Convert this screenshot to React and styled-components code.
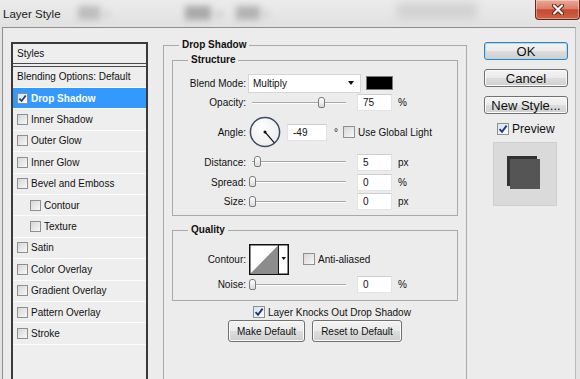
import React from 'react';
import styled, { createGlobalStyle } from 'styled-components';

const GlobalStyle = createGlobalStyle`
  html, body {
    margin: 0;
    padding: 0;
  }
  body {
    width: 580px;
    height: 379px;
    overflow: hidden;
    background: #e3e3e3;
    font-family: "Liberation Sans", Arial, sans-serif;
    color: #111;
  }
`;

const Window = styled.div`
  width: 580px;
  height: 379px;
  display: flex;
  flex-direction: column;
  overflow: hidden;
  background: #e3e3e3;
`;

const TitleBar = styled.div`
  height: 27px;
  flex-shrink: 0;
  display: flex;
  align-items: flex-start;
  background: linear-gradient(#ebebeb, #e1e1e1);
`;

const Title = styled.div`
  width: 70px;
  padding: 8px 0 0 3px;
  font-size: 11.5px;
  line-height: 13px;
  color: #1a1a1a;
  flex-shrink: 0;
`;

// blurred toolbar shapes behind the dialog title
const Smudge = styled.div`
  flex-shrink: 0;
  margin: ${p => p.$top}px 0 0 ${p => p.$ml}px;
  width: ${p => p.$w}px;
  height: ${p => p.$h}px;
  background: ${p => p.$c};
  filter: blur(${p => p.$blur || 3}px);
`;

const CloseButton = styled.div`
  margin-left: auto;
  width: 45px;
  height: 20px;
  box-sizing: border-box;
  flex-shrink: 0;
  display: flex;
  align-items: center;
  justify-content: center;
  border: 1px solid #6a2619;
  border-top: none;
  border-radius: 0 0 4px 4px;
  background: linear-gradient(#eaa895 0%, #dc806a 45%, #c54a30 52%, #cf6446 100%);
  box-shadow: inset 0 0 0 1px rgba(255, 255, 255, 0.35);
`;

const Body = styled.div`
  flex: 1;
  display: flex;
  align-items: flex-start;
  margin: 0 4px 0 2px;
  padding: 14px 0 0 8px;
  background: #ececec;
  border-top: 1px solid #8e8e8e;
  border-left: 1px solid #8e8e8e;
  border-right: 1px solid #b9b9b9;
  overflow: hidden;
`;

/* ---------- styles list ---------- */

const StylesPanel = styled.div`
  width: 137px;
  height: 360px;
  flex-shrink: 0;
  box-sizing: border-box;
  border: 2px solid #3a3a3a;
  background: #eeeeee;
  font-size: 10px;
`;

const PanelHeader = styled.div`
  height: 19px;
  line-height: 19px;
  padding-left: 4px;
  border-bottom: 4px double #4a4a4a;
`;

const BlendingRow = styled.div`
  height: 21px;
  box-sizing: border-box;
  line-height: 20px;
  padding-left: 4px;
  border-bottom: 1px solid #fbfbfb;
`;

const StyleItem = styled.div`
  height: 21.4px;
  box-sizing: border-box;
  display: flex;
  align-items: center;
  gap: 3px;
  padding-left: ${p => (p.$indent ? 17 : 4)}px;
  border-bottom: 1px solid #fbfbfb;
  background: ${p => (p.$active ? '#3399ff' : 'transparent')};
  color: ${p => (p.$active ? '#fff' : '#111')};
  font-weight: ${p => (p.$active ? 'bold' : 'normal')};
`;

/* ---------- checkbox ---------- */

const Box = styled.span`
  width: ${p => p.$size || 12}px;
  height: ${p => p.$size || 12}px;
  box-sizing: border-box;
  flex-shrink: 0;
  display: flex;
  align-items: center;
  justify-content: center;
  margin-left: ${p => p.$ml || 0}px;
  border: 1px solid #8e8f8f;
  background: ${p =>
    p.$checked
      ? 'linear-gradient(135deg, #cfe3f7, #ffffff)'
      : 'linear-gradient(135deg, #d6d6d6, #f8f8f8)'};
`;

const Check = ({ size = 12, checked, ml }) => (
  <Box $size={size} $checked={checked} $ml={ml}>
    {checked && (
      <svg width={size - 2} height={size - 2} viewBox="0 0 10 10">
        <path d="M1.6 5.2 L4 7.8 L8.6 1.6" fill="none" stroke="#24357a" strokeWidth="1.9" />
      </svg>
    )}
  </Box>
);

/* ---------- group boxes ---------- */

const Group = styled.fieldset`
  margin: ${p => p.$mt || 0}px 0 0 ${p => p.$ml || 0}px;
  padding: ${p => p.$pad};
  width: ${p => (p.$w ? `${p.$w}px` : 'auto')};
  height: ${p => (p.$h ? `${p.$h}px` : 'auto')};
  min-width: 0;
  box-sizing: border-box;
  flex-shrink: 0;
  border: 1px solid #a9a9a9;
  font-size: 10px;
`;

const Legend = styled.legend`
  margin-left: ${p => p.$ml}px;
  padding: 0 3px;
  font-size: 10px;
  font-weight: bold;
  line-height: 12px;
  color: #111;
`;

const Row = styled.div`
  height: ${p => p.$h}px;
  display: flex;
  align-items: center;
  white-space: nowrap;
`;

const Label = styled.span`
  width: 73px;
  flex-shrink: 0;
  text-align: right;
`;

const SelectBox = styled.div`
  width: 113px;
  height: 19px;
  box-sizing: border-box;
  margin-left: 2px;
  padding: 0 6px 0 4px;
  display: flex;
  align-items: center;
  justify-content: space-between;
  background: #fff;
  border: 1px solid #d6d6d6;
`;

const Caret = styled.span`
  width: 0;
  height: 0;
  border-left: 3px solid transparent;
  border-right: 3px solid transparent;
  border-top: 4px solid #111;
`;

const Swatch = styled.span`
  width: 27px;
  height: 14px;
  box-sizing: border-box;
  margin-left: 5px;
  background: #000;
  border: 1px solid #7a7a7a;
`;

const SliderTrack = styled.div`
  position: relative;
  width: 94px;
  height: 12px;
  margin-left: 6px;
  flex-shrink: 0;
  &::before {
    content: '';
    position: absolute;
    left: 0;
    right: 0;
    top: 5px;
    height: 1px;
    background: #a8a8a8;
    border-bottom: 1px solid #fdfdfd;
  }
`;

const Thumb = styled.span`
  position: absolute;
  top: 0;
  width: 7px;
  height: 11px;
  box-sizing: border-box;
  border: 1px solid #7b7b7b;
  border-radius: 3px 3px 2px 2px;
  background: linear-gradient(#ffffff, #dadada);
`;

const NumberBox = styled.span`
  width: ${p => p.$w}px;
  height: 17px;
  box-sizing: border-box;
  flex-shrink: 0;
  margin-left: ${p => p.$ml}px;
  padding-left: 5px;
  line-height: 15px;
  background: #fff;
  border: 1px solid #e3e3e3;
  border-top-color: #cdcdcd;
`;

const Unit = styled.span`
  margin-left: ${p => p.$ml || 6}px;
`;

const Text = styled.span`
  margin-left: ${p => p.$ml || 3}px;
`;

const DialWrap = styled.span`
  margin-left: 3px;
  display: flex;
`;

const ContourWrap = styled.span`
  margin-left: 3px;
  display: flex;
`;

const BottomRow = styled.div`
  display: flex;
  align-items: center;
  gap: ${p => p.$gap || 0}px;
  margin: ${p => p.$mt}px 0 0 ${p => p.$ml}px;
  height: ${p => p.$h}px;
  font-size: 10px;
`;

const Button = styled.div`
  width: ${p => p.$w}px;
  height: ${p => p.$h}px;
  box-sizing: border-box;
  display: flex;
  align-items: center;
  justify-content: center;
  margin-top: ${p => p.$mt || 0}px;
  font-size: ${p => p.$fs || 10}px;
  color: #111;
  border: 1px solid ${p => (p.$default ? '#3c7fb1' : '#707070')};
  border-radius: 3px;
  background: linear-gradient(#f3f3f3 0%, #ebebeb 48%, #dddddd 52%, #cfcfcf 100%);
  box-shadow: inset 0 0 0 1px ${p => (p.$default ? '#a8dcf5' : '#fbfbfb')};
`;

/* ---------- right column ---------- */

const SideColumn = styled.div`
  margin-left: 17px;
  display: flex;
  flex-direction: column;
  flex-shrink: 0;
`;

const PreviewToggle = styled.div`
  margin: 9px 0 0 13px;
  height: 12px;
  display: flex;
  align-items: center;
  font-size: 12px;
`;

const PreviewBox = styled.div`
  margin: 7px 0 0 9px;
  width: 64px;
  height: 64px;
  box-sizing: border-box;
  background: #dadada;
  border: 1px solid #cfcfcf;
  display: flex;
`;

const sliderThumb = pos => ({ left: `${1 + pos * 92 - 4}px` });

const Slider = ({ pos }) => (
  <SliderTrack>
    <Thumb style={sliderThumb(pos)} />
  </SliderTrack>
);

const AngleDial = ({ angle }) => {
  const r = (angle * Math.PI) / 180;
  const x = 16 + 14 * Math.cos(r);
  const y = 16 - 14 * Math.sin(r);
  return (
    <svg width="32" height="32" viewBox="0 0 32 32">
      <defs>
        <radialGradient id="dialFill" cx="0.4" cy="0.35" r="0.7">
          <stop offset="0" stopColor="#ffffff" />
          <stop offset="1" stopColor="#ececec" />
        </radialGradient>
      </defs>
      <circle cx="16" cy="16" r="14.6" fill="url(#dialFill)" stroke="#3f4b69" strokeWidth="1.5" />
      <line x1="16" y1="16" x2={x} y2={y} stroke="#111" strokeWidth="1.2" />
      <circle cx="16" cy="16" r="1.5" fill="#111" />
    </svg>
  );
};

const ContourThumb = () => (
  <svg width="40" height="31" viewBox="0 0 40 31">
    <rect x="0.75" y="0.75" width="38.5" height="29.5" fill="#fff" stroke="#111" strokeWidth="1.5" />
    <polygon points="1.5,29.5 29,1.5 29,29.5" fill="#8c8c8c" />
    <line x1="29.5" y1="1" x2="29.5" y2="30" stroke="#111" strokeWidth="1" />
    <polygon points="32.5,13 37,13 34.75,16" fill="#111" />
  </svg>
);

const styleItems = [
  { name: 'Drop Shadow', checked: true, active: true },
  { name: 'Inner Shadow' },
  { name: 'Outer Glow' },
  { name: 'Inner Glow' },
  { name: 'Bevel and Emboss' },
  { name: 'Contour', indent: true },
  { name: 'Texture', indent: true },
  { name: 'Satin' },
  { name: 'Color Overlay' },
  { name: 'Gradient Overlay' },
  { name: 'Pattern Overlay' },
  { name: 'Stroke' },
];

const sliders = [
  { label: 'Distance:', value: '5', unit: 'px', pos: 0.05, h: 20 },
  { label: 'Spread:', value: '0', unit: '%', pos: 0, h: 20 },
  { label: 'Size:', value: '0', unit: 'px', pos: 0, h: 19 },
];

export default function App() {
  return (
    <Window>
      <GlobalStyle />
      <TitleBar>
        <Title>Layer Style</Title>
        <Smudge $top={6} $ml={5} $w={22} $h={14} $c="#bdbdbd" />
        <Smudge $top={12} $ml={3} $w={6} $h={5} $c="#cbcbcb" />
        <Smudge $top={6} $ml={76} $w={26} $h={14} $c="#a9a9a9" />
        <Smudge $top={12} $ml={5} $w={6} $h={5} $c="#c4c4c4" />
        <Smudge $top={6} $ml={14} $w={24} $h={14} $c="#b3b3b3" />
        <Smudge $top={12} $ml={3} $w={6} $h={5} $c="#c8c8c8" />
        <Smudge $top={3} $ml={128} $w={80} $h={16} $c="#d2d2d2" $blur={4} />
        <CloseButton>
          <svg width="14" height="11" viewBox="0 0 14 11">
            <path d="M3 1.5 L11 9.5 M11 1.5 L3 9.5" stroke="#5b1c12" strokeWidth="4" strokeLinecap="round" />
            <path d="M3 1.5 L11 9.5 M11 1.5 L3 9.5" stroke="#ffffff" strokeWidth="2.2" strokeLinecap="round" />
          </svg>
        </CloseButton>
      </TitleBar>

      <Body>
        <StylesPanel>
          <PanelHeader>Styles</PanelHeader>
          <BlendingRow>Blending Options: Default</BlendingRow>
          {styleItems.map(item => (
            <StyleItem key={item.name} $indent={item.indent} $active={item.active}>
              <Check size={11} checked={item.checked} />
              {item.name}
            </StyleItem>
          ))}
        </StylesPanel>

        <Group $ml={15} $mt={-3} $w={304} $h={350} $pad="3px 8px 0 8px">
          <Legend $ml={7}>Drop Shadow</Legend>

          <Group $pad="7px 0 4px 0">
            <Legend $ml={15}>Structure</Legend>
            <Row $h={20}>
              <Label>Blend Mode:</Label>
              <SelectBox>
                Multiply
                <Caret />
              </SelectBox>
              <Swatch />
            </Row>
            <Row $h={19}>
              <Label>Opacity:</Label>
              <Slider pos={0.75} />
              <NumberBox $w={35} $ml={11}>75</NumberBox>
              <Unit>%</Unit>
            </Row>
            <Row $h={40}>
              <Label>Angle:</Label>
              <DialWrap>
                <AngleDial angle={-49} />
              </DialWrap>
              <NumberBox $w={40} $ml={6}>-49</NumberBox>
              <Unit $ml={7}>°</Unit>
              <Check ml={5} />
              <Text>Use Global Light</Text>
            </Row>
            {sliders.map(s => (
              <Row key={s.label} $h={s.h}>
                <Label>{s.label}</Label>
                <Slider pos={s.pos} />
                <NumberBox $w={35} $ml={11}>{s.value}</NumberBox>
                <Unit>{s.unit}</Unit>
              </Row>
            ))}
          </Group>

          <Group $mt={8} $pad="7px 0 6px 0">
            <Legend $ml={15}>Quality</Legend>
            <Row $h={32}>
              <Label>Contour:</Label>
              <ContourWrap>
                <ContourThumb />
              </ContourWrap>
              <Check ml={14} />
              <Text>Anti-aliased</Text>
            </Row>
            <Row $h={19}>
              <Label>Noise:</Label>
              <Slider pos={0} />
              <NumberBox $w={35} $ml={11}>0</NumberBox>
              <Unit>%</Unit>
            </Row>
          </Group>

          <BottomRow $mt={4} $ml={81} $h={14}>
            <Check checked />
            <Text>Layer Knocks Out Drop Shadow</Text>
          </BottomRow>
          <BottomRow $mt={1} $ml={56} $h={22} $gap={7}>
            <Button $w={77} $h={22}>Make Default</Button>
            <Button $w={90} $h={22}>Reset to Default</Button>
          </BottomRow>
        </Group>

        <SideColumn>
          <Button $w={84} $h={18} $fs={13} $default>OK</Button>
          <Button $w={84} $h={18} $fs={13} $mt={9}>Cancel</Button>
          <Button $w={84} $h={18} $fs={13} $mt={9}>New Style...</Button>
          <PreviewToggle>
            <Check checked />
            <Text>Preview</Text>
          </PreviewToggle>
          <PreviewBox>
            <svg width="62" height="62" viewBox="0 0 62 62">
              <rect x="13" y="13" width="30" height="30" fill="#323232" />
              <rect x="16" y="16" width="30" height="30" fill="#555555" />
            </svg>
          </PreviewBox>
        </SideColumn>
      </Body>
    </Window>
  );
}
